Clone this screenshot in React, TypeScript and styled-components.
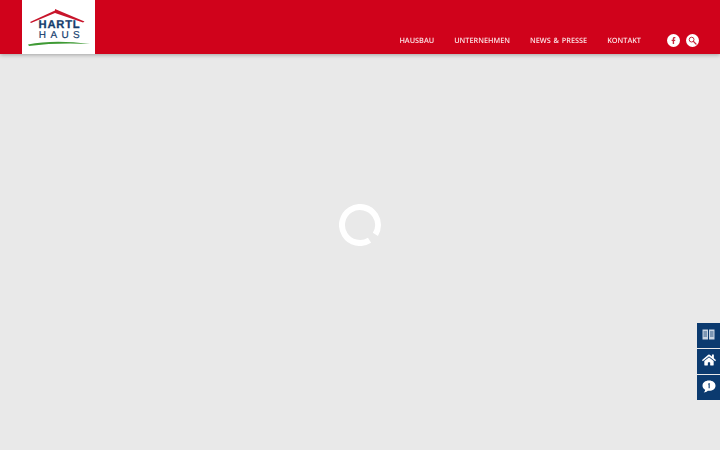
import React from 'react';
import styled, { createGlobalStyle } from 'styled-components';
import { FaFacebookF, FaHome } from 'react-icons/fa';

const Global = createGlobalStyle`
  html, body {
    margin: 0;
    padding: 0;
    background: #e9e9e9;
    font-family: "Open Sans", "Liberation Sans", sans-serif;
    text-rendering: geometricPrecision;
    overflow: hidden;
  }
`;

const Header = styled.header`
  position: fixed;
  top: 0;
  left: 0;
  right: 0;
  height: 54px;
  padding-left: 22px;
  display: flex;
  justify-content: space-between;
  background: #d0021b;
  box-shadow: 0 1px 4px rgba(0, 0, 0, 0.3);
`;

const LogoBox = styled.a`
  position: relative;
  width: 73px;
  height: 54px;
  background: #fff;
  display: flex;
  flex-direction: column;
  align-items: center;
`;

const Roof = styled.svg`
  position: absolute;
  top: 0;
  left: 0;
`;

const LogoTop = styled.span`
  margin: 19px 0 0 2px;
  font-family: "Liberation Sans", Arial, sans-serif;
  font-size: 11.2px;
  line-height: 12px;
  font-weight: 700;
  letter-spacing: 0.8px;
  color: #163e6e;
  -webkit-text-stroke: 0.3px #163e6e;
`;

const LogoBottom = styled.span`
  margin: 0 0 0 6px;
  font-family: "Liberation Sans", Arial, sans-serif;
  font-size: 10px;
  line-height: 10px;
  font-weight: 400;
  letter-spacing: 4.4px;
  color: #163e6e;
  -webkit-text-stroke: 0.2px #163e6e;
`;

const Right = styled.div`
  display: flex;
  align-items: center;
  padding: 26px 21px 0 0;
`;

const Nav = styled.nav`
  display: flex;
  gap: 20px;
  margin: 1px 26px 0 0;
`;

const NavLink = styled.a`
  font-size: 7.3px;
  line-height: 12px;
  font-weight: 600;
  word-spacing: 1px;
  color: #fbdfe2;
  white-space: nowrap;
`;

const Social = styled.div`
  display: flex;
  gap: 6px;
`;

const RoundIcon = styled.a`
  width: 13px;
  height: 13px;
  border-radius: 50%;
  background: #fff;
  display: flex;
  align-items: center;
  justify-content: center;
  color: #c8283d;
`;

const Main = styled.main`
  height: 100vh;
  display: flex;
  align-items: center;
  justify-content: center;
`;

const SideBar = styled.aside`
  position: fixed;
  right: 0;
  top: 323px;
  display: flex;
  flex-direction: column;
  gap: 1px;
`;

const SideButton = styled.a`
  width: 23px;
  height: 25px;
  padding-bottom: 3px;
  box-sizing: border-box;
  background: #0b3a6f;
  color: #fff;
  display: flex;
  align-items: center;
  justify-content: center;
`;

const items = ['HAUSBAU', 'UNTERNEHMEN', 'NEWS & PRESSE', 'KONTAKT'];

const App = () => {
  return (
    <>
      <Global />
      <Main>
        <svg width="42" height="42" viewBox="0 0 42 42">
          <circle
            cx="21"
            cy="21"
            r="18"
            fill="none"
            stroke="#ffffff"
            strokeWidth="6"
            strokeDasharray="104 9.1"
            transform="rotate(58 21 21)"
          />
        </svg>
      </Main>
      <Header>
        <LogoBox>
          <Roof width="73" height="54" viewBox="0 0 73 54">
            <path d="M8 22 L33 10.5 L33 9 L62.5 21.5 L61 22.5 L33 13 L9 23 Z" fill="#c8152b" />
            <path d="M6 44.5 Q32 39.5 68 44 Q34 42.5 7 46 Z" fill="#3f9a35" />
          </Roof>
          <LogoTop>HARTL</LogoTop>
          <LogoBottom>HAUS</LogoBottom>
        </LogoBox>
        <Right>
          <Nav>
            {items.map((item) => (
              <NavLink key={item}>{item}</NavLink>
            ))}
          </Nav>
          <Social>
            <RoundIcon>
              <FaFacebookF size={7} />
            </RoundIcon>
            <RoundIcon>
              <svg width="9" height="9" viewBox="0 0 9 9">
                <circle cx="3.6" cy="3.6" r="2.4" fill="none" stroke="currentColor" strokeWidth="1" />
                <path d="M5.4 5.4 L8 8" stroke="currentColor" strokeWidth="1.3" strokeLinecap="round" />
              </svg>
            </RoundIcon>
          </Social>
        </Right>
      </Header>
      <SideBar>
        <SideButton>
          <svg width="13" height="11" viewBox="0 0 13 11">
            <path d="M0.5 0.5 H6 V10.5 H0.5 Z M7 0.5 H12.5 V10.5 H7 Z" fill="#c9d4e2" />
            <path
              d="M1.5 3 H5 M1.5 5 H5 M1.5 7 H5 M8 3 H11.5 M8 5 H11.5 M8 7 H11.5"
              stroke="#0b3a6f"
              strokeWidth="0.8"
            />
          </svg>
        </SideButton>
        <SideButton>
          <FaHome size={14} />
        </SideButton>
        <SideButton>
          <svg width="14" height="13" viewBox="0 0 14 13">
            <path d="M7 0.5 C10.8 0.5 13.5 2.7 13.5 5.7 C13.5 8.7 10.8 10.8 7 10.8 L5.8 10.7 C4.8 11.7 3.2 12.4 1.8 12.4 C2.6 11.6 3.1 10.6 3.1 9.7 C1.5 8.7 0.5 7.3 0.5 5.7 C0.5 2.7 3.2 0.5 7 0.5 Z" fill="#fff" />
            <path d="M6.3 3.6 L7.7 3 V8.2 H6.6 V4.4 L6.1 4.6 Z" fill="#0b3a6f" />
          </svg>
        </SideButton>
      </SideBar>
    </>
  );
};

export default App;
